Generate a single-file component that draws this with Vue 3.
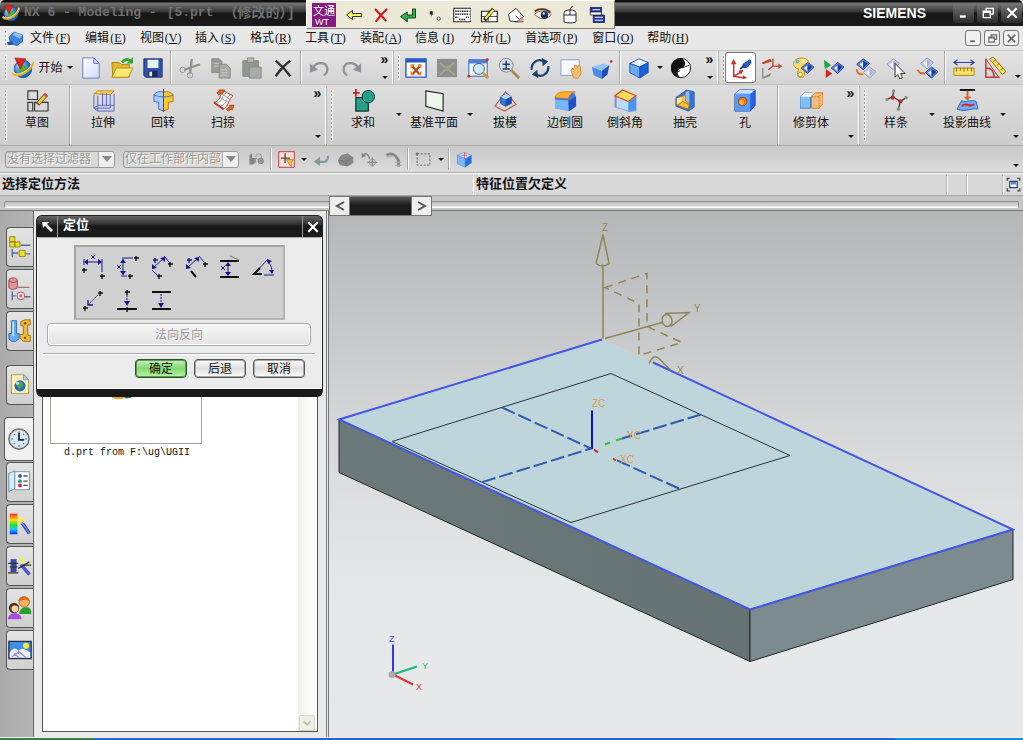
<script setup>
import { ref } from 'vue'

const filter = ref('没有选择过滤器')
const scope = ref('仅在工作部件内部')

const menus = [
  ['文件', 'F'], ['编辑', 'E'], ['视图', 'V'], ['插入', 'S'], ['格式', 'R'], ['工具', 'T'],
  ['装配', 'A'], ['信息', 'I'], ['分析', 'L'], ['首选项', 'P'], ['窗口', 'O'], ['帮助', 'H'],
]

const line = (d, c = '#222', w = 1, extra = '') =>
  `<path d="${d}" fill="none" stroke="${c}" stroke-width="${w}" ${extra}/>`
const fill = (d, c, s = 'none', w = 1) =>
  `<path d="${d}" fill="${c}" stroke="${s}" stroke-width="${w}"/>`
const circle = (x, y, r, c, s = 'none') => `<circle cx="${x}" cy="${y}" r="${r}" fill="${c}" stroke="${s}"/>`
const plus = (x, y, c = '#111') => line(`M${x - 2} ${y}h5M${x} ${y - 2}v5`, c, 1.4)
const gem = (x, y, faded) =>
  fill(`M${x - 7} ${y}l7-6 7 5-7 7z`, faded ? '#c9d2e6' : '#5d84d8', faded ? '#8d99b5' : '#27408f') +
  fill(`M${x - 4} ${y}l4-3v7z`, faded ? '#f4f6fb' : '#dfe9ff') +
  fill(`M${x} ${y - 4}l5 3-5 5z`, faded ? '#aab7d6' : '#1c3d9c')
const cube = (top = '#f2f9ff', left = '#67a9f5', right = '#1f5fd8') =>
  fill('M2 7L12 2l10 4-9 5z', top, '#1c55b8') + fill('M2 7l11 4v12L2 17z', left, '#1c55b8') +
  fill('M22 6l-9 5v12l9-6z', right, '#1c55b8')
const globe =
  circle(12, 13, 9.5, 'url(#g-sea)', '#1f4e9c') + fill('M8 8l7 1 1 5-4 5-5-4z', '#4cae3d') +
  line('M1 17c3 7 20 0 22-12', '#e5ad26', 2.6) + line('M1 16c3 6 19 0 21-11', '#fff1a0', 1) +
  fill('M3 1l12 1-6 11z', '#df2419', '#8f1810', 0.6)

const icons = {
  nx: globe,
  part: fill('M3 10l7-7 12 4v9l-8 6-9-3z', '#3f83dc', '#174796') + fill('M8 7l3-4 11 4-4 5z', '#8cc1f7') + fill('M0 17l8-1v5H1z', '#2456a8'),
  page: fill('M3 1h12l6 6v16H3z', 'url(#g-paper)', '#6277c5') + fill('M15 1v6h6z', '#c8d5ff', '#6277c5'),
  open: fill('M1 6h8l2 2h9v14H2z', '#e4b82d', '#a9800f') + fill('M1 22l5-10h18l-5 10z', '#ffe873', '#b58b12') + line('M12 6c3-4 6-4 9-2', '#36a52d', 3) + fill('M17 7l7 0V0z', '#36a52d'),
  save: fill('M2 2h20v20H4l-2-2z', '#2f52a6', '#1c316c') + fill('M6 3h12v9H6z', '#e9f3ff') + fill('M7 15h10v7H7z', '#1a285a') + fill('M8 16h3v5H8z', '#dfe5f5'),
  cut: circle(4, 14, 3, 'none', '#8d9089') + circle(12, 20, 3, 'none', '#8d9089') + line('M6 14l17-6M12 18L14 2', '#8d9089', 2.4),
  copy: fill('M2 2h8l3 3v12H2z', '#9a9c99', '#868885') + fill('M10 8h8l4 4v11H10z', '#a9aba8', '#838582') + line('M4 7h6M4 10h6M12 14h7M12 17h7M12 20h7', '#ccc'),
  paste: fill('M2 4h17v17H2z', '#93958f', '#858781') + fill('M7 1h7v5H7z', '#b4b6b1', '#858781') + fill('M9 11h13v12H9z', '#a9aca6', '#888'),
  del: line('M4 4c6 5 11 10 16 17M20 4C13 9 8 15 4 21', '#333', 2.6),
  undo: line('M4 12c4-7 16-8 16 2 0 3-2 5-4 6', '#8e9296', 2.4) + fill('M1 7v10l9-3z', '#8e9296'),
  redo: line('M20 12c-4-7-16-8-16 2 0 3 2 5 4 6', '#8e9296', 2.4) + fill('M23 7v10l-9-3z', '#8e9296'),
  fit: fill('M1 2h22v20H1z', '#f8fbff', '#2a59bd', 1.5) + fill('M1 2h22v4H1z', '#2a59bd') + line('M8 10l8 9M16 10l-8 9', '#b34f12', 2.4) + fill('M6 8h5l-5 5zM18 8h-5l5 5zM6 20h5l-5-5zM18 20h-5l5-5z', '#f3812c'),
  fitOff: fill('M1 2h22v20H1z', '#8c8f8b') + line('M4 6l16 13M20 6L4 19', '#aaa58c', 2) + fill('M9 10h6v5H9z', '#a49f89'),
  zoomWin: fill('M2 3h20v18H2z', '#edf5ff', '#2a59bd') + fill('M2 3h20v4H2z', '#4a7edb') + circle(13, 13, 6, '#cde6f8', '#456') + line('M17 17l6 6', '#c89a34', 3) + circle(2, 21, 1.6, '#e12222') + circle(22, 3, 1.6, '#e12222'),
  zoom: circle(9, 9, 7.5, '#d6e0ee', '#77828f') + line('M14 14l9 9', '#a48a5b', 3) + line('M5 8h8M9 4v8M5 13h8', '#22386e', 1.6),
  rotate: line('M3 14c-1-8 7-13 13-9M21 10c1 8-7 13-13 9', '#1e3f74', 2.4) + fill('M14 1l7 4-6 5zM10 23l-7-4 6-5z', '#1e3f74'),
  pan: fill('M1 3h20v17H1z', '#f7faff', '#7b9bd0') + fill('M12 15l2-3 1 2 1-5 2 0 1 3 1-3 2 1 1 8-3 5h-5z', '#f5bf72', '#c98f45'),
  brick: fill('M1 11l13-4 7 3-8 5z', '#8fc1fa') + fill('M1 11l11 4v9L3 20z', '#4b8ae6') + fill('M12 15l8-6-2 10-6 5z', '#1f4fb4') + circle(22, 5, 1.4, '#d22'),
  cube: cube(),
  yin: circle(12, 12, 10.5, '#fff', '#111') + fill('M12 1a11 11 0 0 0 0 22c-5-3-5-9 1-11 5-2 5-8-1-11z', '#111') + line('M13 12l8-3M4 18l7-3', '#333'),
  wcs: line('M4 6v15l9-5M4 21l12 2', '#c23434', 1.6) + fill('M4 2l3 6H1zM15 14l-3 5-3-4zM19 23l-5 1 0-4z', '#c23434') + fill('M14 8l8-5 1 3-4 5-4 1z', '#2862c7', '#1e3b83') + line('M11 13l5-4', '#1e3b83', 2),
  wcs2: line('M2 12v11l9-5M2 23l8-3', '#888', 1.4) + line('M13 2v8h9M13 10l-5 4', '#c23434', 1.4) + fill('M1 6l9-4 2 3-10 3zM23 10l-4 3V7z', '#c5452a'),
  palette: fill('M10 1c7 0 10 4 8 9l-5 3 1 7c-2 4-8 3-8-1l1-6C0 12-1 2 10 1z', '#ffda68', '#b78c18') + circle(6, 5, 2, '#55b4e8') + circle(13, 5, 2, '#f1e5b1') + circle(9, 19, 2.5, '#fff6d2', '#b78c18') + gem(17, 12),
  play: fill('M1 3l8 6-7 4z', '#22a13a') + fill('M3 13l7 5-7 5z', '#c92a22') + gem(16, 12),
  gemSwap: gem(10, 8) + gem(17, 17, true) + line('M3 13c0 4 2 6 7 6', '#e46a22', 2),
  pick: gem(9, 8, true) + fill('M11 7l11 11-5 0 2 5-3 1-2-5-3 3z', '#fff', '#222'),
  gemBack: gem(12, 7, true) + gem(17, 17) + line('M2 14c1 4 4 4 8 4', '#e46a22', 2.2),
  ruler: line('M2 6h20M5 3L1 6l4 3M19 3l4 3-4 3', '#2d3f9b', 1.3) + fill('M1 12h22v8H1z', '#ffe26c', '#9a7c13') + line('M4 12v4M8 12v3M12 12v4M16 12v3M20 12v4', '#775f0b'),
  angle: line('M2 2v20h15M2 12c6 0 9 4 9 10', '#c23636', 1.6) + line('M2 2l14 20', '#b33') + fill('M6 2l4-2 14 16-4 3z', '#ffdf62', '#8d7110') + line('M10 5l3-2M14 9l3-2M18 14l3-2', '#8d7110'),
  sketch: fill('M2 2h10v9H2zM2 14h5v9H2zM9 14h14v9H9z', 'none', '#333', 1.2) + line('M12 16l9-10', '#5c471a', 4.5) + line('M13 15l8-9', '#f3cf3b', 2.8) + line('M19 5l3 3', '#d34f48', 3),
  extrude: fill('M2 5l4-3h17l-4 4z', '#ffcf56', '#c4861c') + line('M2 6v14l4 3h17V5M6 7v16M19 6v14H2M2 20l4-3h17M11 4v14M15 4v14', '#5663d2'),
  revolve: fill('M12 3C7 2 3 4 2 6v7l5 1v7l5 2z', '#aacbff', '#4468cc') + fill('M12 3c5-1 9 1 10 3v7l-5 1v7l-5 2z', '#ffc632', '#a97916') + line('M12 0v24', '#2b379c', 1, 'stroke-dasharray="4 1"') + line('M2 6c5 3 16 3 20 0', '#4468cc'),
  sweep: fill('M2 14C9 13 8 5 12 2l10 5c-5 3-4 10-10 14z', '#fff', '#c43131') + line('M5 15c7-2 5-9 10-11M9 18c7-2 5-9 10-12M7 8l10 6M10 5l9 6', '#999') + fill('M5 4l3-2-1-1h6l-2 4-1-1-3 2zM15 21l4-3-1-1h5l-2 5-1-1-3 2z', '#df6b2c', '#a8461a') + line('M2 14l10 7', '#c43131', 2),
  unite: fill('M4 9h13v14H4z', '#25a18b', '#15352f', 1.3) + circle(17, 8, 6.5, '#25a18b', '#15352f') + line('M1 4h7M4 0v8', '#d71e1e', 1.8),
  plane: fill('M3 2l18 3v18L3 18z', '#edf7ec', '#222', 1.2),
  draft: line('M1 18l11-15 11 13-12 7z', '#b85e51', 1.2) + fill('M7 8l6-3 5 3v7l-6 3-5-3z', '#397adf', '#214f9b') + fill('M7 8l6-3 5 3-6 3z', '#bddafb') + fill('M12 11l6-3v7l-6 3z', '#1e4eac'),
  blend: fill('M1 9l6-5h14l2 4v10l-7 5-15-3z', '#3c7ce5') + fill('M1 9c2-5 5-6 9-6h12c-3 0-6 3-7 7z', '#ffb12b', '#d77714') + fill('M1 11l14 1v11L1 20z', '#77b4ff') + fill('M15 12l8-4v10l-7 5z', '#2452c0'),
  chamfer: fill('M1 7l8-5 14 6v15l-8 0L1 19z', '#b8dcff', '#75a9e6') + fill('M1 7l8-6 14 6-8 6z', '#ffdc5c', '#d34b2d', 1.3) + fill('M15 13l8-5v14l-8 2z', '#4a93f0') + line('M2 8v11', '#d34b2d'),
  shell: fill('M2 9l11-8 8 2v16l-6 4-13-5z', '#3772d6', '#3460ac') + fill('M3 10l9-4v6l4 3-1 6-12-4z', '#ffc13b', '#9e731a') + fill('M12 3l4-1v13l-4-3z', '#8fbcf7') + fill('M3 10l5-2v5l-5 3z', '#efe3b2') + line('M4 17l5-4 6 3', '#9e731a'),
  hole: fill('M1 5l5-4h16v16l-5 6H1z', '#2564ea', '#173e9e') + fill('M1 5h16v18H1z', '#5a9aff') + fill('M1 5l5-4h16l-5 4z', '#c9e3ff') + circle(9, 13, 4.5, '#e47b20', '#944f17') + circle(8, 14, 2.4, '#ffb347'),
  trim: fill('M0 8l5-4h8l-2 4v12H0z', '#81bff4', '#3f7ec5') + fill('M0 8l5-4h9l-3 4z', '#e6f5ff') + fill('M12 8l4-4h8v11l-4 5h-8z', '#f3bd7c', '#e17422') + line('M12 8h8l4-4M20 8v12', '#e17422', 1, 'stroke-dasharray="2 1"'),
  spline: line('M2 11l6-3 8 5 6-4M8 8l1-6M16 13l-2 8', '#333', 1.3) + circle(8, 9, 2.2, '#c72332') + circle(16, 13, 2.2, '#c72332') + circle(2, 11, 1.7, '#888') + circle(9, 2, 1.7, '#888') + circle(22, 9, 1.7, '#888') + circle(14, 21, 1.7, '#888'),
  project: line('M4 1h16', '#111', 2) + line('M12 2v8', '#d26725', 2) + fill('M8 8h8l-4 4z', '#d26725') + fill('M1 21l5-9c5 3 10-2 15 1l2 8c-8-2-11 4-22 0z', '#73acf1', '#3266b1') + line('M6 18c5-5 8 2 13-2', '#d12828', 2),
  greyAsm: fill('M2 6l4-3v7h5v6l-4 3H2z', '#858782') + circle(15, 8, 4, 'none', '#8c8980') + circle(18, 14, 4, '#a19d91', '#7d7b73'),
  snap: fill('M1 1h22v22H1z', '#f4e1dd', '#c6383d', 1.4) + line('M10 3v14M4 10h13', '#5c4332', 1.8) + fill('M12 12h10l-3 4v6l-4-4z', '#f3bd3e', '#ae7e17'),
  back: line('M21 7c1 8-4 9-13 8', '#83989b', 3) + fill('M1 15l9-7v13z', '#83989b'),
  lump: fill('M1 13l5-7 9-3 8 6v8l-8 5-11-2z', '#858985') + line('M2 13l10 2 10-6M12 15l2 6', '#6d716d'),
  target: line('M2 7c4-5 8-4 10 4M16 9v13M9 16h14', '#868b87', 2) + circle(16, 16, 4.5, 'none', '#868b87') + fill('M1 2v8l6-3z', '#868b87'),
  steps: line('M2 6c6-4 12-2 17 7v9', '#858a86', 4) + line('M1 8h9M14 16h9M14 20h9', '#aaa', 1.5),
  marquee: line('M3 4h18v16H3z', '#666', 1.4, 'stroke-dasharray="3 2"') + line('M1 4h4M3 2v4', '#666', 1.5),
  blueCube: fill('M2 6l9-4 11 4-9 5z', '#cbe6ff', '#5a8fdb') + fill('M2 6l11 5v12L2 18z', '#79b7fb', '#5a8fdb') + fill('M22 6l-9 5v12l9-6z', '#2470df') + line('M8 6h8M12 2v9', '#e23b3b'),
  full: fill('M6 7h12v10H6z', '#fff', '#234779', 2) + fill('M8 8h8v4H8z', '#4f8fdd') + line('M2 6V2h4M18 2h4v4M22 18v4h-4M6 22H2v-4', '#444', 2),
  asmTree: fill('M2 2h6v6H2zM2 8h6v6H2zM8 8h6v6H8zM13 18h7v7h-7z', '#f0df27', '#8c7d11') + line('M15 12h11M5 16v10M5 21h7M21 22h5', '#59699a', 1.6),
  partTree: fill('M1 4c0-4 10-4 10 0v8c0 3-10 3-10 0z', '#dd969b', '#953b43') + line('M1 4c2 3 8 3 10 0M12 12h13', '#953b43') + line('M5 17v10M5 22h4M19 23h7', '#59699a', 1.6) + circle(15, 22, 4.5, '#f7dfdf', '#a5474c') + circle(15, 22, 1.5, '#b54a50'),
  bolt: fill('M4 2h6v15h3v6l-4 3H4l-3-3v-6h3z', '#66aaf0', '#2166ad') + fill('M5 3h2v17H5z', '#c5e3ff') + fill('M15 3l5-2h6v6h-3v12h3v7h-8l-4-4v-4h4V8h-3z', '#f0bb36', '#99680a') + circle(20, 5, 1.4, '#704f0d') + circle(20, 22, 1.4, '#704f0d'),
  web: fill('M4 2h15l5 6v16H4z', '#fff3b4', '#9f9354') + fill('M18 2v6h6z', '#b8d0f4', '#7893b8') + circle(14, 15, 6.5, '#2966c4') + fill('M9 12l7-2 2 5-5 4z', '#4cae3d') + circle(11, 12, 2, '#b0d9ff'),
  clock: circle(14, 14, 12, '#8d9699', '#52585a') + circle(14, 14, 10, '#d8eaf6', '#e9eeee') + line('M14 7v8h6', '#1d2733', 2) + line('M14 5v2M14 21v2M5 14h2M21 14h2M8 8l1 1M20 8l-1 1M8 20l1-1M20 20l-1-1', '#366', 1.3),
  roles: fill('M1 4l7-3v21l-7 3z', '#d8eef7', '#568098') + fill('M8 2h17v21H8z', '#f7fcff', '#718a98') + circle(14, 7, 2.3, '#375bbd') + circle(14, 13, 2.3, '#36a35c') + circle(14, 18, 2.3, '#d5284f') + line('M18 7h5M18 13h5M18 18h5', '#555', 1.5),
  rainbow: '<rect x="2" y="2" width="9" height="24" fill="url(#g-rainbow)"/>' + line('M16 12l9 13', '#323aa7', 4) + line('M16 12l9 13', '#777bea', 2) + line('M15 5v9M11 9h9M12 6l7 7M19 6l-7 7', '#f1ef61', 1.5),
  wizard: fill('M3 6h7v15H3z', '#3b48aa') + line('M0 11h12M2 15h9M0 22h12M18 13h9', '#333', 1.4) + line('M15 12l10 12', '#4d54ce', 4) + line('M16 3v9M12 7h9M13 4l7 7', '#ecec62', 1.8) + line('M25 9l-13 8', '#222', 1.5),
  people: circle(19, 7, 6, '#f4b35e', '#aa6819') + fill('M12 6c1-8 13-6 13 0l-5-2z', '#d56b13') + fill('M13 21c0-10 14-10 14-3v3z', '#279d2c') + circle(7, 14, 6, '#503326') + circle(8, 15, 4, '#ffd0a2') + fill('M0 27c0-9 15-9 16 0z', '#a64fe0'),
  landscape: fill('M1 4h26v20H1z', '#3c8fe6', '#26304d', 1.5) + fill('M2 17c4-6 7-6 10-2 4-4 6-3 14 2v6H2z', '#eeeef9') + circle(21, 9, 3.5, '#ffe52f') + line('M7 18l6 5M12 15l9 8M5 22c4-4 6-6 8-4', '#9892c3', 1.5),
  imeLeft: fill('M2 12l8-6v4h12v4H10v4z', '#fff56b', '#222', 1.2),
  imeX: line('M4 4l15 16M20 4C14 9 9 15 5 21', '#d5141c', 2.8),
  imeEnter: fill('M18 4h4v12H11v5l-9-7 9-6v4h7z', '#31b050', '#173e1c', 1.3),
  imePunct: fill('M5 7h4v4l-2 3V11H5z', '#222') + circle(17, 17, 2.2, 'none', '#222'),
  imeKeys: fill('M1 3h23v18H1z', '#fff', '#222', 1.4) + line('M3 7h19M3 11h19M3 15h4M17 15h4M8 18h9', '#222', 2, 'stroke-dasharray="2 1"'),
  imePen: fill('M2 7h21v14H2z', '#fff', '#222', 1.5) + line('M11 7v14M2 14h21', '#222') + line('M6 19L18 4', '#222', 5) + line('M7 17L18 5', '#ffec42', 3),
  imeErase: fill('M2 11l10-8 10 11-9 7-9-1z', '#fff', '#222', 1.2) + line('M10 21h12M12 13l5 5', '#222', 1.2) + fill('M14 20l7-5 2 4-4 2z', '#e79b91'),
  imeEye: fill('M1 11C6 5 18 5 23 12c-7 7-17 6-22-1z', '#fff8dd', '#54351f') + line('M1 7c5-4 16-4 21 2', '#54351f', 2.5) + circle(14, 12, 5, '#172d70') + circle(13, 10, 1.5, '#fff'),
  imeMouse: fill('M4 9c0-5 16-5 16 0v12c0 2-16 2-16 0z', '#fff', '#222', 1.3) + line('M4 12h16M12 6v6M12 6c0-4 3-4 3-6', '#222', 1.3),
  imeMenu: fill('M3 2h15v6H3zM7 12h15v10H7z', '#1c34a6', '#101b58') + fill('M3 8h15v4H3z', '#fff', '#222') + line('M9 15h11M9 19h11M6 5h10', '#fff', 1.4),
  min: line('M5 18h10', 'currentColor', 4),
  restore: line('M9 8V4h12v10h-4M4 9h12v11H4zM4 11h12', 'currentColor', 2.4),
  close: line('M4 4l16 16M20 4L4 20', 'currentColor', 3.6),
}

const blue = '#16168a'
const positionIcons = [
  ['水平', plus(5, 17) + plus(23, 23) + line('M5 6v6M23 6v13M6 9h16M12 2l4 4M16 2l-4 4', blue) + fill('M5 9l4-3v6zM23 9l-4-3v6z', blue)],
  ['竖直', plus(23, 5) + plus(17, 23) + line('M9 5h11M8 23h6M10 6v16M4 12l4 4M8 12l-4 4', blue) + fill('M10 6l3 4H7zM10 22l3-4H7z', blue)],
  ['平行', plus(8, 7, blue) + plus(23, 11) + plus(12, 23) + line('M6 15L17 5M17 3l5 6M5 17l5 5', blue) + fill('M5 16v-5l5 4zM18 4v5l-5-4z', blue)],
  ['垂直', plus(8, 7, blue) + plus(24, 11) + line('M6 15L17 5M18 3l5 6', blue) + fill('M5 16v-5l5 4zM18 4v5l-5-4z', blue) + line('M10 18l5 6', '#111', 2)],
  ['按一定距离平行', line('M5 8h19M5 24h19', '#111', 2) + line('M13 10v12M6 13l4 4M10 13l-4 4', blue) + fill('M13 9l3 4h-6zM13 23l3-4h-6z', blue) + line('M15 3l9 4', '#777')],
  ['角度', line('M5 21L19 6M18 8c4 3 5 7 5 12M15 22h10', blue) + line('M11 15l-6 6h8', '#111', 2) + fill('M18 6l5 2-4 3zM23 21l-3-4h5z', blue)],
  ['点到点', plus(6, 21) + plus(21, 6) + line('M19 8L9 18', blue, 1, 'stroke-dasharray="2 1"') + line('M9 13v5h5', blue, 1.3)],
  ['点到线', plus(14, 5) + line('M4 22h20', '#111', 2) + plus(14, 22) + line('M14 8v10', blue, 1, 'stroke-dasharray="2 1"') + fill('M11 14h6l-3 5z', blue)],
  ['线到线', line('M5 5h19M5 22h19', '#111', 2) + line('M14 7v12', blue, 1, 'stroke-dasharray="2 1"') + fill('M11 16h6l-3 5z', blue)],
]

const standardBar = [
  {
    cls: 'files', overflow: true,
    items: [['start', 'nx', '开始'], ['b', 'page', '新建'], ['b', 'open', '打开'], ['b', 'save', '保存'], ['sep'],
      ['b', 'cut', '剪切'], ['b', 'copy', '复制'], ['b', 'paste', '粘贴'], ['b', 'del', '删除'], ['sep'],
      ['b', 'undo', '撤消'], ['b', 'redo', '重做']],
  },
  {
    cls: 'views', overflow: true,
    items: [['b', 'fit', '适合窗口'], ['b', 'fitOff', '适合选择'], ['b', 'zoomWin', '窗口缩放'], ['b', 'zoom', '缩放'],
      ['b', 'rotate', '旋转'], ['b', 'pan', '平移'], ['b', 'brick', '透视'], ['sep'], ['b', 'cube', '着色'], ['caret'], ['b', 'yin', '背景']],
  },
  {
    cls: 'utility', end: true,
    items: [['on', 'wcs', 'WCS 定向'], ['b', 'wcs2', 'WCS 原点'], ['b', 'palette', '对象显示'], ['b', 'play', '显示和隐藏'],
      ['b', 'gemSwap', '隐藏'], ['b', 'pick', '显示'], ['b', 'gemBack', '反转'], ['sep'], ['b', 'ruler', '测量距离'], ['b', 'angle', '测量角度']],
  },
]
const featureBar = [
  { cls: 'design', overflow: true, items: [['b', 'sketch', '草图'], ['sep'], ['b', 'extrude', '拉伸'], ['b', 'revolve', '回转'], ['b', 'sweep', '扫掠']] },
  {
    cls: 'operation', overflow: true,
    items: [['b', 'unite', '求和'], ['caret'], ['b', 'plane', '基准平面'], ['caret'], ['b', 'draft', '拔模'], ['b', 'blend', '边倒圆'],
      ['b', 'chamfer', '倒斜角'], ['b', 'shell', '抽壳'], ['b', 'hole', '孔'], ['sep'], ['b', 'trim', '修剪体']],
  },
  { cls: 'curves', end: true, items: [['b', 'spline', '样条'], ['caret'], ['b', 'project', '投影曲线'], ['caret']] },
]
const imeButtons = ['imeLeft', 'imeX', 'imeEnter', 'imePunct', 'imeKeys', 'imePen', 'imeErase', 'imeEye', 'imeMouse', 'imeMenu']
const sideTabs = [
  ['asmTree', '装配导航器'], ['partTree', '部件导航器'], ['bolt', '重用库'], ['web', '浏览器', 'spaced'], ['clock', '历史记录', 'active'],
  ['roles', '角色'], ['rainbow', '可视化场景'], ['wizard', '加工向导'], ['people', '用户'], ['landscape', '背景图'],
]
</script>

<template>
  <div class="app">
    <svg class="defs" aria-hidden="true">
      <defs>
        <radialGradient id="g-sea" cx=".35" cy=".35"><stop offset="0" stop-color="#b5e4ff" /><stop offset="1" stop-color="#1a68c8" /></radialGradient>
        <linearGradient id="g-paper" x2="1" y2="1"><stop offset="0" stop-color="#fff" /><stop offset="1" stop-color="#cfdcff" /></linearGradient>
        <linearGradient id="g-rainbow" x2="0" y2="1">
          <stop offset="0" stop-color="#f22" /><stop offset=".3" stop-color="#fd0" /><stop offset=".55" stop-color="#2d3" />
          <stop offset=".75" stop-color="#1cf" /><stop offset="1" stop-color="#22e" />
        </linearGradient>
        <linearGradient id="g-left"><stop offset="0" stop-color="#6b797b" /><stop offset="1" stop-color="#657375" /></linearGradient>
      </defs>
    </svg>

    <header class="titlebar">
      <svg class="logo" viewBox="0 0 24 24" v-html="icons.nx" />
      <h1 class="title"><span>NX 6 - Modeling -</span><span>[5.prt</span><span class="cjk">（修改的）]</span></h1>
      <span class="brand">SIEMENS</span>
      <div class="win-buttons">
        <button v-for="n in ['min', 'restore', 'close']" :key="n" :aria-label="n"><svg viewBox="0 0 24 24" v-html="icons[n]" /></button>
      </div>
      <div class="ime">
        <svg class="ime-logo" viewBox="0 0 24 24">
          <rect width="24" height="24" fill="#851a86" />
          <text x="1" y="12" font-size="11" fill="#fff">文通</text>
          <text x="3" y="22" font-size="9" fill="#fff">WT</text>
        </svg>
        <button v-for="n in imeButtons" :key="n" :aria-label="n"><svg viewBox="0 0 24 24" v-html="icons[n]" /></button>
      </div>
    </header>

    <nav class="menubar">
      <i class="grip" />
      <svg class="part" viewBox="0 0 24 24" v-html="icons.part" />
      <a v-for="m in menus" :key="m[1]" href="#">{{ m[0] }}<span class="key">(<u>{{ m[1] }}</u>)</span></a>
      <div class="mdi">
        <button v-for="n in ['min', 'restore', 'close']" :key="n" :aria-label="n"><svg viewBox="0 0 24 24" v-html="icons[n]" /></button>
      </div>
    </nav>

    <div v-for="(bar, b) in [standardBar, featureBar]" :key="b" class="bar" :class="b ? 'feature' : 'standard'">
      <div v-for="g in bar" :key="g.cls" class="group" :class="g.cls">
        <i class="grip" />
        <template v-for="(it, i) in g.items" :key="i">
          <i v-if="it[0] === 'sep'" class="sep" />
          <button v-else-if="it[0] === 'caret'" class="drop" aria-label="更多"><i class="caret" /></button>
          <button v-else class="tool" :class="it[0]" :aria-label="it[2]">
            <svg viewBox="0 0 24 24" v-html="icons[it[1]]" />
            <span v-if="b || it[0] === 'start'">{{ it[2] }}</span>
            <i v-if="it[0] === 'start'" class="caret" />
          </button>
        </template>
        <button v-if="g.overflow" class="overflow" aria-label="工具条选项"><span>»</span><i class="caret" /></button>
        <button v-if="g.end" class="overflow end" aria-label="工具条选项"><i class="caret" /></button>
      </div>
    </div>

    <div class="selection">
      <label class="combo filter">
        <select v-model="filter" disabled aria-label="类型过滤器"><option>没有选择过滤器</option></select><b><i /></b>
      </label>
      <label class="combo scope">
        <select v-model="scope" disabled aria-label="选择范围"><option>仅在工作部件内部</option></select><b><i /></b>
      </label>
      <button class="small" aria-label="装配"><svg viewBox="0 0 24 24" v-html="icons.greyAsm" /></button>
      <i class="sep" />
      <button class="small" aria-label="捕捉"><svg viewBox="0 0 24 24" v-html="icons.snap" /></button>
      <button class="drop" aria-label="更多"><i class="caret" /></button>
      <button v-for="n in ['back', 'lump', 'target', 'steps']" :key="n" class="small" :aria-label="n"><svg viewBox="0 0 24 24" v-html="icons[n]" /></button>
      <i class="sep" />
      <button class="small" aria-label="矩形选择"><svg viewBox="0 0 24 24" v-html="icons.marquee" /></button>
      <button class="drop" aria-label="更多"><i class="caret" /></button>
      <i class="sep" />
      <button class="small" aria-label="实体"><svg viewBox="0 0 24 24" v-html="icons.blueCube" /></button>
      <button class="overflow end" aria-label="工具条选项"><i class="caret" /></button>
    </div>

    <div class="status">
      <p class="prompt">选择定位方法</p>
      <p class="state">特征位置欠定义</p>
      <i class="cell narrow" /><i class="cell wide" />
      <button class="cell" aria-label="全屏"><svg viewBox="0 0 24 24" v-html="icons.full" /></button>
    </div>

    <div class="splitter">
      <div class="rail" />
      <div class="clip">
        <button aria-label="向左"><svg viewBox="0 0 12 12"><path d="M10 2L3 6l7 4" /></svg></button>
        <div class="clip-bar" />
        <button aria-label="向右"><svg viewBox="0 0 12 12"><path d="M2 2l7 4-7 4" /></svg></button>
      </div>
    </div>

    <main class="work">
      <aside class="tabs">
        <button v-for="t in sideTabs" :key="t[0]" :class="t[2]" :aria-label="t[1]"><svg viewBox="0 0 28 28" v-html="icons[t[0]]" /></button>
      </aside>

      <section class="panel">
        <div class="history">
          <div class="entry">
            <div class="thumb">
              <svg viewBox="0 0 40 40"><circle cx="20" cy="20" r="15" fill="#1b5b9b" /><path d="M15 34c6 3 13 1 16-5l-8 2z" fill="#16735b" /><path d="M3 31c4 7 12 6 17 3l-8-2z" fill="#f0a030" /></svg>
            </div>
            <p>d.prt from F:\ug\UGII</p>
          </div>
          <div class="scroll"><button aria-label="向下滚动"><svg viewBox="0 0 12 12"><path d="M2 4l4 4 4-4" /></svg></button></div>
        </div>

        <div class="dialog" role="dialog" aria-label="定位">
          <div class="dialog-title">
            <svg class="pointer" viewBox="0 0 16 16"><path d="M3 3h7L8 5l6 6-2 2-6-6-2 2z" fill="#fff" /></svg>
            <h2>定位</h2>
            <button aria-label="关闭"><svg viewBox="0 0 24 24" v-html="icons.close" /></button>
          </div>
          <div class="dialog-body">
            <div class="methods">
              <button v-for="p in positionIcons" :key="p[0]" :aria-label="p[0]"><svg viewBox="0 0 28 28" v-html="p[1]" /></button>
            </div>
            <button class="reverse" disabled>法向反向</button>
            <hr>
            <div class="actions">
              <button class="ok">确定</button><button>后退</button><button>取消</button>
            </div>
          </div>
        </div>
      </section>

      <section class="canvas">
        <svg viewBox="329 211 694 525" class="scene">
          <path d="M339 419L603 339L1013 529L750 609z" fill="#bfd5dc" />
          <path d="M339 419V472L750 661V609z" fill="url(#g-left)" stroke="#202526" />
          <path d="M750 609V661L1013 579V529z" fill="#7c8b8f" stroke="#202526" />
          <path d="M653 362L1013 529L750 609L339 419L602 339" fill="none" stroke="#4457e4" stroke-width="2" />
          <path d="M604 340L652 361" stroke="#d5cdca" />
          <path d="M392 441L611 373L790 455L571 522z" fill="none" stroke="#26343a" />
          <path d="M502 407L591 448L481 482M701 414L622 438M679 488L615 459" fill="none" stroke="#3059b0" stroke-width="2" stroke-dasharray="14 4" />
          <path d="M592 410V448" stroke="#1010b0" stroke-width="2" />
          <path d="M605 444l5-2M616 440l6-2" stroke="#2dc62d" stroke-width="2" />
          <path d="M594 449l4 3M613 458l3 2" stroke="#d22" stroke-width="2" />
          <g fill="#df9550" font-size="10"><text x="592" y="406">ZC</text><text x="627" y="438">YC</text><text x="620" y="462">XC</text></g>
          <g fill="none" stroke="#8f8558" stroke-width="1.500">
            <path d="M603 338V264M596 263L603 234L609 263Q603 268 596 263M605 338L662 322M665 313L689 312L671 326" />
            <ellipse cx="667" cy="320" rx="5" ry="6" transform="rotate(-15 667 320)" />
            <path d="M605 287L647 273V326L682 342L639 355V303z" stroke-dasharray="8 6" />
            <path d="M649 363Q654 352 660 359L671 370" />
          </g>
          <g fill="#8f8558" font-size="10"><text x="602" y="230">Z</text><text x="694" y="311">Y</text><text x="677" y="373">X</text></g>
          <g stroke-width="2"><path d="M393 674V644" stroke="#3a36e4" /><path d="M393 674L417 666" stroke="#15b97c" /><path d="M393 674L413 684" stroke="#df3535" /></g>
          <circle cx="392" cy="674" r="3.500" fill="#aaa" />
          <g font-size="9"><text x="389" y="641" fill="#3a36e4">Z</text><text x="422" y="668" fill="#15b97c">Y</text><text x="416" y="689" fill="#df3535">X</text></g>
        </svg>
      </section>
    </main>
    <footer class="taskbar"><i class="start-edge" /><i class="task-edge" /><i class="tray-edge" /></footer>
  </div>
</template>

<style>
body { margin: 0; }
</style>

<style scoped>
.app { display: flex; flex-direction: column; min-height: 100vh; background: #d4d4d4; color: #111; font: 12px/16px "Liberation Sans", "Noto Sans CJK SC", sans-serif; overflow: hidden; }
.app * { box-sizing: border-box; }
.defs { position: absolute; width: 0; height: 0; }
button { display: flex; align-items: center; justify-content: center; margin: 0; padding: 0; border: 0; background: none; font: inherit; color: inherit; flex: none; }
svg { display: block; flex: none; }
h1, h2, p { margin: 0; }
.caret { width: 0; height: 0; border: 3px solid transparent; border-top-color: #111; border-bottom: 0; flex: none; }
.grip { width: 3px; margin: 4px 1px 4px 4px; flex: none; background: radial-gradient(circle, #999 1px, transparent 1px) 0 0 / 3px 4px, linear-gradient(90deg, transparent, #fff); }
.sep { width: 6px; align-self: stretch; flex: none; background: linear-gradient(90deg, transparent 2px, #a8a8a8 2px 3px, #fff 3px 4px, transparent 4px); }

.titlebar { position: relative; display: flex; align-items: center; height: 26px; padding-right: 1px; background: linear-gradient(#111 0 2px, #777 3px, #333 12px, #171717 13px, #1b1b1b); border-radius: 5px 5px 0 0; }
.logo { width: 18px; height: 18px; margin: 0 4px 0 2px; }
.title { display: flex; gap: 10px; flex: 1; font: bold 13px/18px "Liberation Mono", "Noto Sans CJK SC", monospace; color: #707070; white-space: nowrap; }
.title .cjk { font-size: 14px; }
.brand { color: #fff; font: bold 14px/18px "Liberation Sans", sans-serif; margin-right: 27px; }
.win-buttons { display: flex; gap: 3px; }
.win-buttons button { width: 21px; height: 20px; color: #fff; background: linear-gradient(#777, #2b2b2b); border-radius: 3px; }
.win-buttons svg { width: 14px; height: 14px; }
.ime { position: absolute; left: 306px; top: 0; z-index: 2; display: flex; align-items: center; height: 29px; padding: 0 4px 0 5px; background: #ece9d8; border: 1px solid #fff; border-right-color: #8a8778; border-bottom-color: #8a8778; }
.ime-logo { width: 24px; height: 24px; margin-right: 4px; }
.ime button { width: 27px; height: 24px; }
.ime button svg { width: 18px; height: 18px; }

.menubar { display: flex; align-items: center; gap: 13px; height: 24px; padding-right: 4px; background: #e8e8e8; }
.menubar .grip { align-self: stretch; margin-right: -13px; }
.part { width: 17px; height: 17px; margin-right: -7px; }
.menubar a { color: #111; text-decoration: none; white-space: nowrap; }
.key { display: inline-block; width: 18px; text-align: center; font-family: "Liberation Serif", serif; }
.mdi { display: flex; gap: 3px; margin-left: auto; }
.mdi button { width: 16px; height: 16px; color: #666; border: 1px solid #777; border-radius: 3px; background: #f1f1f1; }
.mdi svg { width: 11px; height: 11px; }

.bar { display: flex; background: linear-gradient(#e4e4e4, #d3d3d3); border-top: 1px solid #c2c2c2; }
.group { display: flex; align-items: center; flex: none; border-right: 1px solid #fff; box-shadow: 1px 0 #b4b4b4; }
.group > .grip { align-self: stretch; }
.standard { height: 34px; }
.files { width: 393px; }
.views { width: 325px; }
.utility, .curves { flex: 1; border-right: 0; }
.group > .grip { margin-right: 0; }
.standard .tool { width: 31px; height: 31px; }
.standard .tool svg { width: 22px; height: 22px; }
.standard .tool.start { width: 68px; padding-left: 3px; gap: 4px; }
.standard .on { background: #fff; border: 1px solid #777; border-radius: 3px; }
.drop { width: 11px; align-self: stretch; }
.overflow { flex-direction: column; justify-content: space-between; align-self: stretch; width: 15px; margin-left: auto; padding: 4px 0 5px; }
.overflow span { font: bold 14px/8px "Liberation Sans", sans-serif; }
.overflow.end { justify-content: flex-end; }
.standard .overflow.end { padding-bottom: 6px; }

.feature { height: 62px; background: linear-gradient(#dedede, #cdcdcd); border-bottom: 1px solid #aaa; }
.design { width: 326px; }
.operation { width: 533px; }
.feature .tool { flex-direction: column; width: 60px; height: 56px; justify-content: flex-start; gap: 3px; padding-top: 2px; white-space: nowrap; }
.feature .tool svg { width: 23px; height: 23px; }
.feature .drop { align-items: flex-start; padding-top: 28px; }
.feature .overflow { padding-bottom: 7px; }

.selection { display: flex; align-items: center; height: 27px; padding-left: 5px; background: linear-gradient(#c8c8c8, #dcdcdc); border-bottom: 1px solid #aaa; }
.combo { display: flex; height: 17px; border: 1px solid #999; border-radius: 3px; background: #d8d8d8; overflow: hidden; flex: none; }
.filter { width: 110px; margin-right: 8px; }
.scope { width: 116px; margin-right: 5px; }
.combo select { flex: 1; min-width: 0; margin: 0; padding: 0 0 0 1px; border: 0; background: none; appearance: none; font: inherit; line-height: 15px; color: #9a978d; opacity: 1; text-shadow: 1px 1px #fff; }
.combo b { display: flex; align-items: center; justify-content: center; width: 16px; background: #eee; border-left: 1px solid #aaa; }
.combo b i { border: 5px solid transparent; border-top: 6px solid #888; border-bottom: 0; }
.small { width: 24px; height: 22px; }
.small svg { width: 17px; height: 17px; }
.selection .sep { height: 22px; align-self: center; }

.status { display: flex; align-items: stretch; height: 22px; background: #d9d9d9; border-top: 1px solid #fff; font-weight: bold; font-size: 13px; line-height: 19px; }
.prompt { width: 473px; padding-left: 2px; }
.state { flex: 1; padding-left: 2px; border-left: 1px solid #fff; }
.cell { border-left: 1px solid #fff; width: 20px; box-shadow: -1px 0 #b5b5b5; }
.wide { width: 36px; }
.cell svg { width: 15px; height: 15px; }

.splitter { position: relative; height: 16px; padding: 5px 4px 0; background: #c6c6c6; border-top: 1px solid #a5a5a5; border-bottom: 1px solid #77776a; }
.rail { height: 7px; border: 1px solid #8d8d8d; border-bottom-color: #fff; background: linear-gradient(#bbb, #e5e5e5); border-radius: 2px; }
.clip { position: absolute; z-index: 3; left: 329px; top: 0; display: flex; width: 103px; height: 20px; border: 1px solid #777; }
.clip button { width: 19px; background: #eee; }
.clip-bar { flex: 1; background: linear-gradient(#555, #1b1b1b 45%); border: solid #777; border-width: 0 1px; }
.clip svg { width: 12px; height: 12px; fill: none; stroke: #555; stroke-width: 2; }

.work { display: flex; flex: 1; min-height: 526px; }
.tabs { width: 33px; flex: none; display: flex; flex-direction: column; align-items: flex-end; gap: 2px; padding-top: 16px; background: linear-gradient(90deg, #aaa, #b5b5b5); }
.tabs button { width: 27px; height: 40px; border: 1px solid #555; border-right: 0; border-radius: 4px 0 0 4px; background: linear-gradient(#e4e4e4, #d0d0d0); }
.tabs .spaced { margin-top: 12px; }
.tabs .active { width: 29px; height: 44px; margin-top: 10px; margin-bottom: -1px; background: #f1f1f1; }
.tabs svg { width: 24px; height: 24px; }
.panel { position: relative; display: flex; width: 296px; flex: none; padding: 8px 8px 5px 8px; background: #e9e9e9; border-left: 1px solid #666; border-right: 3px double #777; }
.history { display: flex; flex: 1; border: 1px solid #555; background: #fff; }
.entry { flex: 1; padding: 76px 0 0 7px; }
.thumb { display: flex; justify-content: center; align-items: center; width: 152px; height: 148px; border: 1px solid #a0a094; }
.thumb svg { width: 40px; height: 40px; margin-top: 26px; }
.entry p { padding-left: 14px; font: 10px/18px "Liberation Mono", monospace; }
.scroll { width: 18px; margin-right: 1px; display: flex; align-items: flex-end; justify-content: center; background: linear-gradient(90deg, #f2f2ec, #fff); }
.scroll button { width: 16px; height: 16px; border: 1px solid #d5d5ca; border-radius: 2px; background: #efefe6; }
.scroll svg { width: 10px; height: 10px; fill: none; stroke: #b8b8a8; stroke-width: 2; }

.dialog { position: absolute; left: 2px; top: 4px; z-index: 2; width: 287px; border: 1px solid #222; border-bottom: 8px solid #191919; border-radius: 6px; background: #191919; overflow: hidden; }
.dialog-title { display: flex; align-items: center; height: 21px; color: #fff; background: linear-gradient(#666, #333 8px, #181818 10px, #1d1d1d); }
.pointer { width: 16px; height: 16px; margin: 0 2px; }
.dialog h2 { flex: 1; align-self: stretch; padding-left: 5px; border-left: 1px solid #999; font-size: 13px; line-height: 18px; }
.dialog-title button { width: 20px; height: 21px; border-left: 1px solid #999; }
.dialog-title button svg { width: 14px; height: 14px; }
.dialog-body { padding: 7px 10px 10px 9px; background: #ebebeb; border: 1px solid #fff; border-top-color: #aaa; }
.methods { display: grid; grid-template-columns: repeat(6, 34px); justify-content: start; width: 211px; height: 75px; margin: 0 auto 3px 27px; padding: 3px 0; background: #d0d0d0; border: 2px solid #a3a3a3; border-right-color: #b5b5b5; border-bottom-color: #b5b5b5; }
.methods button { height: 34px; }
.methods svg { width: 28px; height: 28px; }
.reverse { width: 100%; height: 23px; color: #999; background: linear-gradient(#f6f6f6, #e3e3e3); border: 1px solid #aaa; border-radius: 4px; box-shadow: inset 0 0 0 1px #fff; }
hr { margin: 7px -4px 4px; border: 0; border-top: 1px solid #aaa; border-bottom: 1px solid #fff; }
.actions { display: flex; justify-content: flex-end; gap: 7px; padding-right: 6px; }
.actions button { width: 52px; height: 19px; border: 1px solid #555; border-radius: 4px; background: linear-gradient(#fff, #ddd 50%, #fff); box-shadow: inset 0 0 0 1px #aaa; }
.actions .ok { background: linear-gradient(#c8efc0, #83d870 50%, #b9f5a5); border-color: #265425; box-shadow: inset 0 0 0 1px #5da052; }

.canvas { flex: 1; min-width: 0; background: linear-gradient(#b5b6b7, #d5d6d8 40%, #e5e8e9 72%, #e6e8e9); }
.scene { width: 100%; height: 100%; font-family: "Liberation Sans", sans-serif; }
.taskbar { display: flex; height: 3px; border-top: 1px solid #eee; }
.start-edge { width: 93px; background: #388340; }
.task-edge { flex: 1; background: #2868c5; }
.tray-edge { width: 128px; background: #198bd8; }
</style>
